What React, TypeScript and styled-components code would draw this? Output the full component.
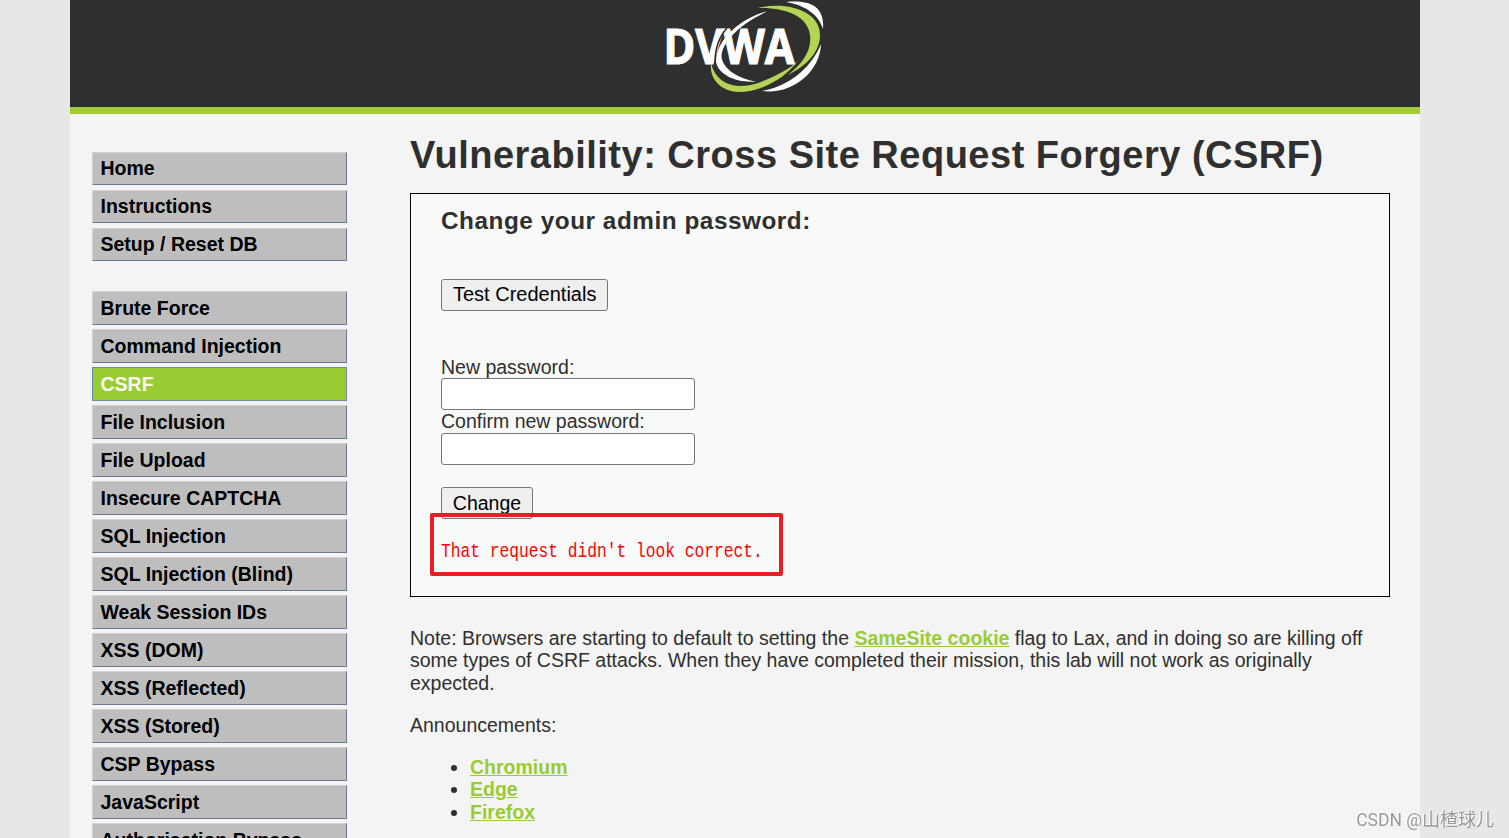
import * as React from "react";
import styled, { createGlobalStyle, css } from "styled-components";

const GlobalStyle = createGlobalStyle`
  * {
    box-sizing: border-box;
  }

  html,
  body {
    margin: 0;
    height: 838px;
    overflow: hidden;
  }

  body {
    background: #e7e7e7;
    color: #2f2f2f;
    font-family: "Liberation Sans", Arial, sans-serif;
    font-size: 19.5px;
    line-height: 22.4px;
  }
`;

const Wrapper = styled.div`
  width: 1350px;
  height: 838px;
  margin-left: 70px;
  overflow: hidden;
  background: #f4f4f4;
`;

const Header = styled.header`
  height: 114px;
  padding: 1px 0 0 595px;
  background: #2f2f2f;
  border-bottom: 7px solid #a1cc33;
`;

const LogoSvg = styled.svg`
  display: block;
  font-family: "Open Sans", sans-serif;
  font-weight: 700;
`;

const Columns = styled.div`
  display: flex;
  align-items: flex-start;
`;

const Menu = styled.nav`
  width: 255px;
  margin: 38px 63px 0 22px;
  line-height: 22.5px;
`;

const MenuBlock = styled.ul<{ $compact?: boolean }>`
  display: flex;
  flex-direction: column;
  gap: ${props => (props.$compact ? 5 : 4)}px;
  margin: 0 0 30px;
  padding: 0;
  list-style: none;
`;

const MenuItem = styled.li<{ $selected?: boolean; $compact?: boolean }>`
  height: ${props => (props.$compact ? 33 : 34)}px;
  padding: ${props => (props.$compact ? 4 : 5)}px 0 0 7.5px;
  background: #bebebe;
  border: 1px solid #d2d2d2;
  border-right-color: #6b7894;
  border-bottom-color: #6b7894;
  color: #000;
  font-weight: bold;
  white-space: nowrap;

  ${props =>
    props.$selected &&
    css`
      background: #99cc33;
      border-color: #7189a8;
      color: #f8f8f0;
    `}
`;

const Content = styled.main`
  width: 980px;
  padding-top: 18px;
`;

const Title = styled.h1`
  margin: 0 0 15px;
  font-size: 38px;
  line-height: 46px;
  letter-spacing: 0.5px;
  white-space: nowrap;
`;

const Panel = styled.section`
  height: 404px;
  padding: 11px 30px 0;
  background: #f8faf9;
  border: 1px solid #000;
`;

const PanelTitle = styled.h3`
  margin: 0 0 43px;
  font-size: 24.3px;
  line-height: 31px;
  letter-spacing: 0.55px;
`;

const Button = styled.button`
  display: block;
  height: 32px;
  padding: 0 11px 2px;
  background: #efefef;
  border: 1px solid #767676;
  border-radius: 3px;
  color: #000;
  font: 20px/28px "Liberation Sans", Arial, sans-serif;
`;

const Form = styled.form`
  margin-top: 45px;
`;

const Label = styled.label`
  display: block;
  height: 22px;

  input + & {
    line-height: 20.5px;
  }
`;

const Input = styled.input`
  display: block;
  width: 254px;
  height: 32px;
  margin-bottom: 1px;
  background: #fff;
  border: 1px solid #767676;
  border-radius: 3px;
`;

const Submit = styled(Button)`
  width: 92px;
  margin-top: 22px;
  padding: 0;
  font-size: 19.5px;
`;

const Message = styled.div`
  position: relative;
  height: 62px;
`;

const MessageText = styled.pre`
  display: inline-block;
  margin: 21px 0 0;
  color: #f00;
  font-family: "Liberation Mono", monospace;
  font-size: 19.5px;
  line-height: 24px;
  transform: scaleX(0.8333);
  transform-origin: left;
`;

const Highlight = styled.div`
  position: absolute;
  left: -11px;
  top: -6px;
  width: 353px;
  height: 63px;
  border: 4px solid #ed1c24;
  border-radius: 2px;
`;

const Paragraph = styled.p`
  margin: 30px 0 0;
  white-space: nowrap;

  & + & {
    margin-top: 19.5px;
  }
`;

const Link = styled.a`
  color: #99cc33;
  font-weight: bold;
  text-decoration: underline;
`;

const LinkList = styled.ul`
  margin: 19.6px 0 0;
  padding-left: 60px;
  line-height: 22.5px;
`;

const Watermark = styled.div`
  position: fixed;
  right: 15px;
  bottom: 5px;
  color: #999;
  font-family: "Noto Sans CJK SC", sans-serif;
  font-size: 18px;
  line-height: 26px;
  text-shadow: -1px -1px 0 #fff;
  white-space: nowrap;
`;

const Site = styled.span`
  font-family: Roboto, sans-serif;
  font-size: 17.5px;
`;

const general = ["Home", "Instructions", "Setup / Reset DB"];

const vulnerabilities = [
  "Brute Force",
  "Command Injection",
  "CSRF",
  "File Inclusion",
  "File Upload",
  "Insecure CAPTCHA",
  "SQL Injection",
  "SQL Injection (Blind)",
  "Weak Session IDs",
  "XSS (DOM)",
  "XSS (Reflected)",
  "XSS (Stored)",
  "CSP Bypass",
  "JavaScript",
  "Authorisation Bypass"
];

const Logo = () => (
  <LogoSvg width="160" height="94" viewBox="0 0 160 94">
    {/* outer white arcs */}
    <path
      d="M121 1C143 -1 160 4 158 28C154 15 143 5 121 1Z"
      fill="#fff"
    />
    <path
      d="M156 43C155 72 126 94 97 90C122 86 146 68 156 43Z"
      fill="#fff"
    />
    {/* green swoosh */}
    <path
      d="M93 7C122 0 155 10 155 34C155 50 143 64 123 74C137 63 147 50 145 34C143 15 120 6 93 7Z"
      fill="#b4d455"
    />
    <path
      d="M46 62C51 84 72 90 96 81C111 75 124 68 133 60C120 77 97 91 73 91C56 90 44 78 46 62Z"
      fill="#b4d455"
    />
    <text
      x="-1.5"
      y="62.7"
      fill="#fff"
      stroke="#fff"
      strokeWidth="1.2"
      fontSize="48.5"
      textLength="131"
      lengthAdjust="spacingAndGlyphs"
    >
      DVWA
    </text>
    {/* inner white swoosh, with a dark edge where it crosses the lettering */}
    <path
      d="M62 27C53 37 50 49 50 62M72 28C62 36 57 45 57 56"
      fill="none"
      stroke="#2f2f2f"
      strokeWidth="1.6"
    />
    <path
      d="M102 10.5C84 14 51 34 51 61C54 75 73 82 91 80.5C74 78 57 68 56.5 55C57 42 74 23 102 10.5Z"
      fill="#fff"
    />
  </LogoSvg>
);

const App = () => {
  return (
    <>
      <GlobalStyle />
      <Wrapper>
        <Header>
          <Logo />
        </Header>
        <Columns>
          <Menu>
            <MenuBlock $compact>
              {general.map(item => (
                <MenuItem key={item} $compact>
                  {item}
                </MenuItem>
              ))}
            </MenuBlock>
            <MenuBlock>
              {vulnerabilities.map(item => (
                <MenuItem key={item} $selected={item === "CSRF"}>
                  {item}
                </MenuItem>
              ))}
            </MenuBlock>
          </Menu>
          <Content>
            <Title>Vulnerability: Cross Site Request Forgery (CSRF)</Title>
            <Panel>
              <PanelTitle>Change your admin password:</PanelTitle>
              <Button type="button">Test Credentials</Button>
              <Form>
                <Label htmlFor="new">New password:</Label>
                <Input id="new" type="password" />
                <Label htmlFor="confirm">Confirm new password:</Label>
                <Input id="confirm" type="password" />
                <Submit type="button">Change</Submit>
              </Form>
              <Message>
                <MessageText>That request didn't look correct.</MessageText>
                <Highlight />
              </Message>
            </Panel>
            <Paragraph>
              Note: Browsers are starting to default to setting the{" "}
              <Link>SameSite cookie</Link> flag to Lax, and in doing so are
              killing off
              <br />
              some types of CSRF attacks. When they have completed their
              mission, this lab will not work as originally
              <br />
              expected.
            </Paragraph>
            <Paragraph>Announcements:</Paragraph>
            <LinkList>
              <li>
                <Link>Chromium</Link>
              </li>
              <li>
                <Link>Edge</Link>
              </li>
              <li>
                <Link>Firefox</Link>
              </li>
            </LinkList>
          </Content>
        </Columns>
      </Wrapper>
      <Watermark>
        <Site>CSDN @</Site>山楂球儿
      </Watermark>
    </>
  );
};

export default App;
